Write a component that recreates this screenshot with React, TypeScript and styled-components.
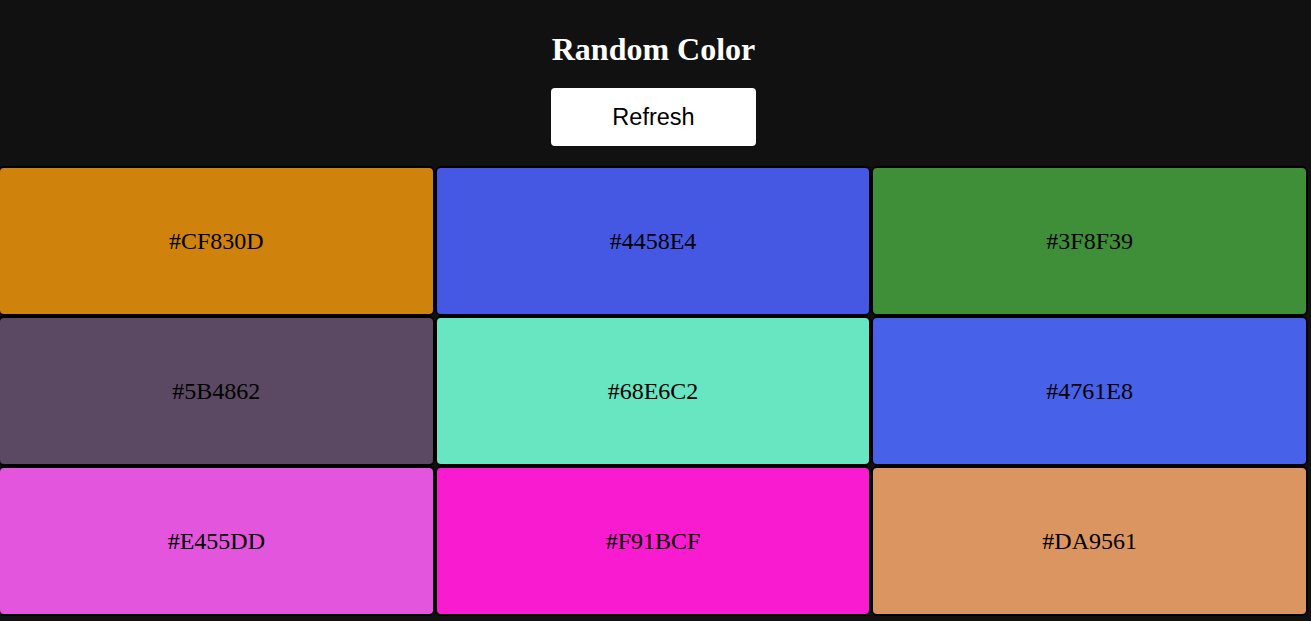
import React from "react";
import styled, { createGlobalStyle } from "styled-components";

const GlobalStyle = createGlobalStyle`
  html, body {
    margin: 0;
    padding: 0;
    background: #111111;
    overflow: hidden;
  }
  * { box-sizing: border-box; }
`;

const Page = styled.div`
  display: flex;
  flex-direction: column;
  align-items: center;
  width: 1307px;
  padding-top: 32px;
  min-height: 621px;
  background: #111111;
`;

const Title = styled.h1`
  margin: 0;
  font-family: "Liberation Serif", "Times New Roman", serif;
  font-weight: 700;
  font-size: 32px;
  line-height: 35px;
  color: #ffffff;
`;

const RefreshButton = styled.button`
  margin-top: 21px;
  width: 205px;
  height: 58px;
  border: none;
  border-radius: 4px;
  background: #ffffff;
  color: #000000;
  font-family: "Liberation Sans", Arial, sans-serif;
  font-size: 23.5px;
  cursor: pointer;
`;

const Grid = styled.div`
  margin-top: 20px;
  align-self: flex-start;
  margin-left: -2px;
  width: 1310px;
  display: grid;
  grid-template-columns: repeat(3, 1fr);
`;

const Swatch = styled.div<{ $color: string }>`
  height: 150px;
  border: 2px solid #000000;
  border-radius: 6px;
  background: ${(p) => p.$color};
  display: flex;
  align-items: center;
  justify-content: center;
  font-family: "Liberation Serif", "Times New Roman", serif;
  font-size: 24px;
  color: #000000;
`;

const colors = [
  "#CF830D",
  "#4458E4",
  "#3F8F39",
  "#5B4862",
  "#68E6C2",
  "#4761E8",
  "#E455DD",
  "#F91BCF",
  "#DA9561",
];

export default function App() {
  return (
    <>
      <GlobalStyle />
      <Page>
        <Title>Random Color</Title>
        <RefreshButton>Refresh</RefreshButton>
        <Grid>
          {colors.map((c) => (
            <Swatch key={c} $color={c}>
              {c}
            </Swatch>
          ))}
        </Grid>
      </Page>
    </>
  );
}
